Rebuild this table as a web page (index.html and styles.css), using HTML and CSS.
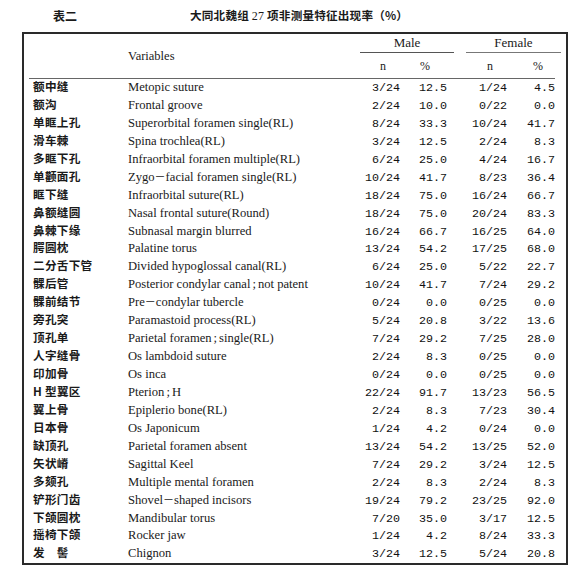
FILE: index.html
```html
<!DOCTYPE html>
<html lang="zh">
<head>
<meta charset="utf-8">
<title>表二</title>
<link rel="stylesheet" href="styles.css">
</head>
<body>
<div class="title-row">
  <span class="tab-no">表二</span>
  <span class="tab-title">大同北魏组 <span class="num">27</span> 项非测量特征出现率（%）</span>
</div>
<div class="box">
  <div class="head">
    <div class="h-var">Variables</div>
    <div class="h-male">Male</div>
    <div class="h-female">Female</div>
    <div class="h-sub c3">n</div>
    <div class="h-sub c4">%</div>
    <div class="h-sub c5">n</div>
    <div class="h-sub c6">%</div>
  </div>
  <div class="body">
    <div class="row"><span class="zh">额中缝</span><span class="en">Metopic suture</span><span class="v">3/24</span><span class="v">12.5</span><span class="v">1/24</span><span class="v">4.5</span></div>
    <div class="row"><span class="zh">额沟</span><span class="en">Frontal groove</span><span class="v">2/24</span><span class="v">10.0</span><span class="v">0/22</span><span class="v">0.0</span></div>
    <div class="row"><span class="zh">单眶上孔</span><span class="en">Superorbital foramen single(RL)</span><span class="v">8/24</span><span class="v">33.3</span><span class="v">10/24</span><span class="v">41.7</span></div>
    <div class="row"><span class="zh">滑车棘</span><span class="en">Spina trochlea(RL)</span><span class="v">3/24</span><span class="v">12.5</span><span class="v">2/24</span><span class="v">8.3</span></div>
    <div class="row"><span class="zh">多眶下孔</span><span class="en">Infraorbital foramen multiple(RL)</span><span class="v">6/24</span><span class="v">25.0</span><span class="v">4/24</span><span class="v">16.7</span></div>
    <div class="row"><span class="zh">单颧面孔</span><span class="en">Zygo<span class="dash">－</span>facial foramen single(RL)</span><span class="v">10/24</span><span class="v">41.7</span><span class="v">8/23</span><span class="v">36.4</span></div>
    <div class="row"><span class="zh">眶下缝</span><span class="en">Infraorbital suture(RL)</span><span class="v">18/24</span><span class="v">75.0</span><span class="v">16/24</span><span class="v">66.7</span></div>
    <div class="row"><span class="zh">鼻额缝圆</span><span class="en">Nasal frontal suture(Round)</span><span class="v">18/24</span><span class="v">75.0</span><span class="v">20/24</span><span class="v">83.3</span></div>
    <div class="row"><span class="zh">鼻棘下缘</span><span class="en">Subnasal margin blurred</span><span class="v">16/24</span><span class="v">66.7</span><span class="v">16/25</span><span class="v">64.0</span></div>
    <div class="row"><span class="zh">腭圆枕</span><span class="en">Palatine torus</span><span class="v">13/24</span><span class="v">54.2</span><span class="v">17/25</span><span class="v">68.0</span></div>
    <div class="row"><span class="zh">二分舌下管</span><span class="en">Divided hypoglossal canal(RL)</span><span class="v">6/24</span><span class="v">25.0</span><span class="v">5/22</span><span class="v">22.7</span></div>
    <div class="row"><span class="zh">髁后管</span><span class="en">Posterior condylar canal<span class="sep">;</span>not patent</span><span class="v">10/24</span><span class="v">41.7</span><span class="v">7/24</span><span class="v">29.2</span></div>
    <div class="row"><span class="zh">髁前结节</span><span class="en">Pre<span class="dash">－</span>condylar tubercle</span><span class="v">0/24</span><span class="v">0.0</span><span class="v">0/25</span><span class="v">0.0</span></div>
    <div class="row"><span class="zh">旁孔突</span><span class="en">Paramastoid process(RL)</span><span class="v">5/24</span><span class="v">20.8</span><span class="v">3/22</span><span class="v">13.6</span></div>
    <div class="row"><span class="zh">顶孔单</span><span class="en">Parietal foramen<span class="sep">;</span>single(RL)</span><span class="v">7/24</span><span class="v">29.2</span><span class="v">7/25</span><span class="v">28.0</span></div>
    <div class="row"><span class="zh">人字缝骨</span><span class="en">Os lambdoid suture</span><span class="v">2/24</span><span class="v">8.3</span><span class="v">0/25</span><span class="v">0.0</span></div>
    <div class="row"><span class="zh">印加骨</span><span class="en">Os inca</span><span class="v">0/24</span><span class="v">0.0</span><span class="v">0/25</span><span class="v">0.0</span></div>
    <div class="row"><span class="zh">H 型翼区</span><span class="en">Pterion<span class="sep">;</span>H</span><span class="v">22/24</span><span class="v">91.7</span><span class="v">13/23</span><span class="v">56.5</span></div>
    <div class="row"><span class="zh">翼上骨</span><span class="en">Epiplerio bone(RL)</span><span class="v">2/24</span><span class="v">8.3</span><span class="v">7/23</span><span class="v">30.4</span></div>
    <div class="row"><span class="zh">日本骨</span><span class="en">Os Japonicum</span><span class="v">1/24</span><span class="v">4.2</span><span class="v">0/24</span><span class="v">0.0</span></div>
    <div class="row"><span class="zh">缺顶孔</span><span class="en">Parietal foramen absent</span><span class="v">13/24</span><span class="v">54.2</span><span class="v">13/25</span><span class="v">52.0</span></div>
    <div class="row"><span class="zh">矢状嵴</span><span class="en">Sagittal Keel</span><span class="v">7/24</span><span class="v">29.2</span><span class="v">3/24</span><span class="v">12.5</span></div>
    <div class="row"><span class="zh">多颏孔</span><span class="en">Multiple mental foramen</span><span class="v">2/24</span><span class="v">8.3</span><span class="v">2/24</span><span class="v">8.3</span></div>
    <div class="row"><span class="zh">铲形门齿</span><span class="en">Shovel<span class="dash">－</span>shaped incisors</span><span class="v">19/24</span><span class="v">79.2</span><span class="v">23/25</span><span class="v">92.0</span></div>
    <div class="row"><span class="zh">下颌圆枕</span><span class="en">Mandibular torus</span><span class="v">7/20</span><span class="v">35.0</span><span class="v">3/17</span><span class="v">12.5</span></div>
    <div class="row"><span class="zh">摇椅下颌</span><span class="en">Rocker jaw</span><span class="v">1/24</span><span class="v">4.2</span><span class="v">8/24</span><span class="v">33.3</span></div>
    <div class="row"><span class="zh">发　髻</span><span class="en">Chignon</span><span class="v">3/24</span><span class="v">12.5</span><span class="v">5/24</span><span class="v">20.8</span></div>
  </div>
</div>
<p class="note">注：表中出现率为出现例数与观察例数之比，左右侧均计入统计。</p>
</body>
</html>
```

FILE: styles.css
```css
html, body {
  margin: 0;
  padding: 0;
  background: #ffffff;
  color: #1a1a1a;
}

body {
  width: 588px;
  font-family: "Liberation Serif", "Noto Sans CJK SC", serif;
}

.title-row {
  display: flex;
  align-items: center;
  height: 32px;
  padding-left: 53px;
  box-sizing: border-box;
  padding-bottom: 2px;
}

.tab-no {
  font-family: "Noto Sans CJK SC", sans-serif;
  font-weight: 700;
  font-size: 12px;
  width: 137px;
}

.tab-title {
  font-family: "Noto Sans CJK SC", sans-serif;
  font-weight: 700;
  font-size: 11.6px;
  letter-spacing: 0.2px;
}

.tab-title .num {
  font-family: "Liberation Serif", serif;
  font-weight: 400;
  font-size: 12px;
}

.box {
  margin-left: 22px;
  width: 546px;
  box-sizing: border-box;
  border: 2px solid #2a2a2a;
  padding: 0 11px 0 9px;
}

.head,
.row {
  display: grid;
  grid-template-columns: 95px 232px 40px 47px 60px 48px;
}

.head {
  grid-template-rows: 19px 25px;
  border-bottom: 1px solid #666;
  margin-left: -4px;
  padding-left: 4px;
}

.h-var {
  grid-column: 2;
  grid-row: 1 / 3;
  align-self: center;
  font-size: 12.5px;
}

.h-male {
  grid-column: 3 / 5;
  grid-row: 1;
  margin-right: -7px;
  border-bottom: 1px solid #555;
  text-align: center;
  font-size: 13px;
  line-height: 18px;
}

.h-female {
  grid-column: 5 / 7;
  grid-row: 1;
  margin-left: 19px;
  margin-right: -6px;
  border-bottom: 1px solid #777;
  text-align: center;
  font-size: 13px;
  line-height: 18px;
}

.h-sub {
  grid-row: 2;
  font-size: 12px;
  line-height: 26px;
  text-align: center;
}

.c3 { grid-column: 3; padding-left: 6px; }
.c4 { grid-column: 4; padding-left: 3px; }
.c5 { grid-column: 5; padding-left: 26px; }
.c6 { grid-column: 6; padding-left: 14px; }

.row {
  height: 17.95px;
  align-items: baseline;
}

.row > span {
  line-height: 14px;
}

.zh {
  font-family: "Noto Sans CJK SC", sans-serif;
  font-weight: 700;
  font-size: 11.6px;
  letter-spacing: 0.3px;
  white-space: nowrap;
}

.en {
  font-family: "Liberation Serif", serif;
  font-size: 12.6px;
  white-space: nowrap;
}

.dash {
  font-family: "Noto Sans CJK SC", sans-serif;
  font-size: 11px;
}

.sep {
  padding: 0 2px;
}

.v {
  font-family: "Liberation Mono", monospace;
  font-size: 11.7px;
  color: #111;
  text-align: right;
  white-space: nowrap;
}

.note {
  margin: 3px 0 0 30px;
  font-family: "Noto Sans CJK SC", sans-serif;
  font-size: 11px;
  color: #666;
}
```
